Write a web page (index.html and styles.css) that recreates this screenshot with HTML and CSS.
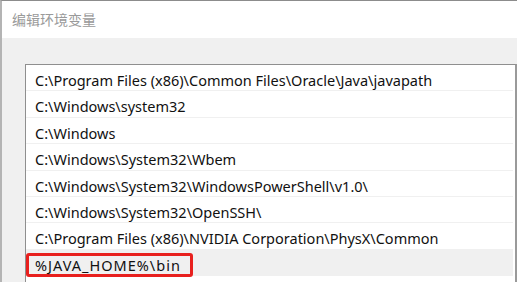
FILE: index.html
```html
<!DOCTYPE html>
<html lang="zh-CN">
<head>
    <meta charset="UTF-8">
    <title>编辑环境变量</title>
    <link rel="stylesheet" href="styles.css">
</head>
<body>
    <div class="window">
        <div class="title-bar">编辑环境变量</div>
        <div class="dialog-body">
            <ul class="path-list">
                <li>C:\Program Files (x86)\Common Files\Oracle\Java\javapath</li>
                <li>C:\Windows\system32</li>
                <li>C:\Windows</li>
                <li>C:\Windows\System32\Wbem</li>
                <li>C:\Windows\System32\WindowsPowerShell\v1.0\</li>
                <li>C:\Windows\System32\OpenSSH\</li>
                <li>C:\Program Files (x86)\NVIDIA Corporation\PhysX\Common</li>
                <li class="selected"><span class="highlight">%JAVA_HOME%\bin</span></li>
            </ul>
        </div>
    </div>
</body>
</html>
```

FILE: styles.css
```css
* {box-sizing: border-box; margin: 0; padding: 0;}
html, body {height: 100%;}
body {
    background: #f0f0f0;
    font-family: "Noto Sans", "Noto Sans CJK SC", sans-serif;
    overflow: hidden;
}

.window {
    height: 100%;
    display: flex;
    flex-direction: column;
    border-top: 1px solid #8c8c8c;
    border-left: 2px solid #b4b4b4;
    background: #f0f0f0;
}

.title-bar {
    height: 37px;
    background: #fff;
    color: #9a9a9a;
    font-family: "Noto Sans CJK SC", sans-serif;
    font-size: 14px;
    line-height: 37px;
    padding-left: 10px;
}

.dialog-body {
    flex: 1;
    min-height: 0;
    padding: 26px 0 0 23px;
}

.path-list {
    list-style: none;
    height: 100%;
    background: #fff;
    border: 1px solid #8f8f8f;
    border-right: 2px solid #9a9a9a;
    border-bottom: none;
    overflow: hidden;
}

.path-list li {
    height: 26.4px;
    line-height: 26px;
    padding: 2px 0 0 9px;
    margin-right: 2px;
    font-size: 14.5px;
    color: #111;
    border-bottom: 1px solid #f0f0f0;
    white-space: nowrap;
}

.path-list li.selected {
    background: #f0f0f0;
    border-bottom: none;
    padding: 0;
}

.highlight {
    display: inline-block;
    height: 24px;
    line-height: 18px;
    margin-top: 3px;
    padding: 0 9px 0 6px;
    border: 3px solid #e8201e;
    border-radius: 3px;
    letter-spacing: 1px;
    vertical-align: top;
}
```
